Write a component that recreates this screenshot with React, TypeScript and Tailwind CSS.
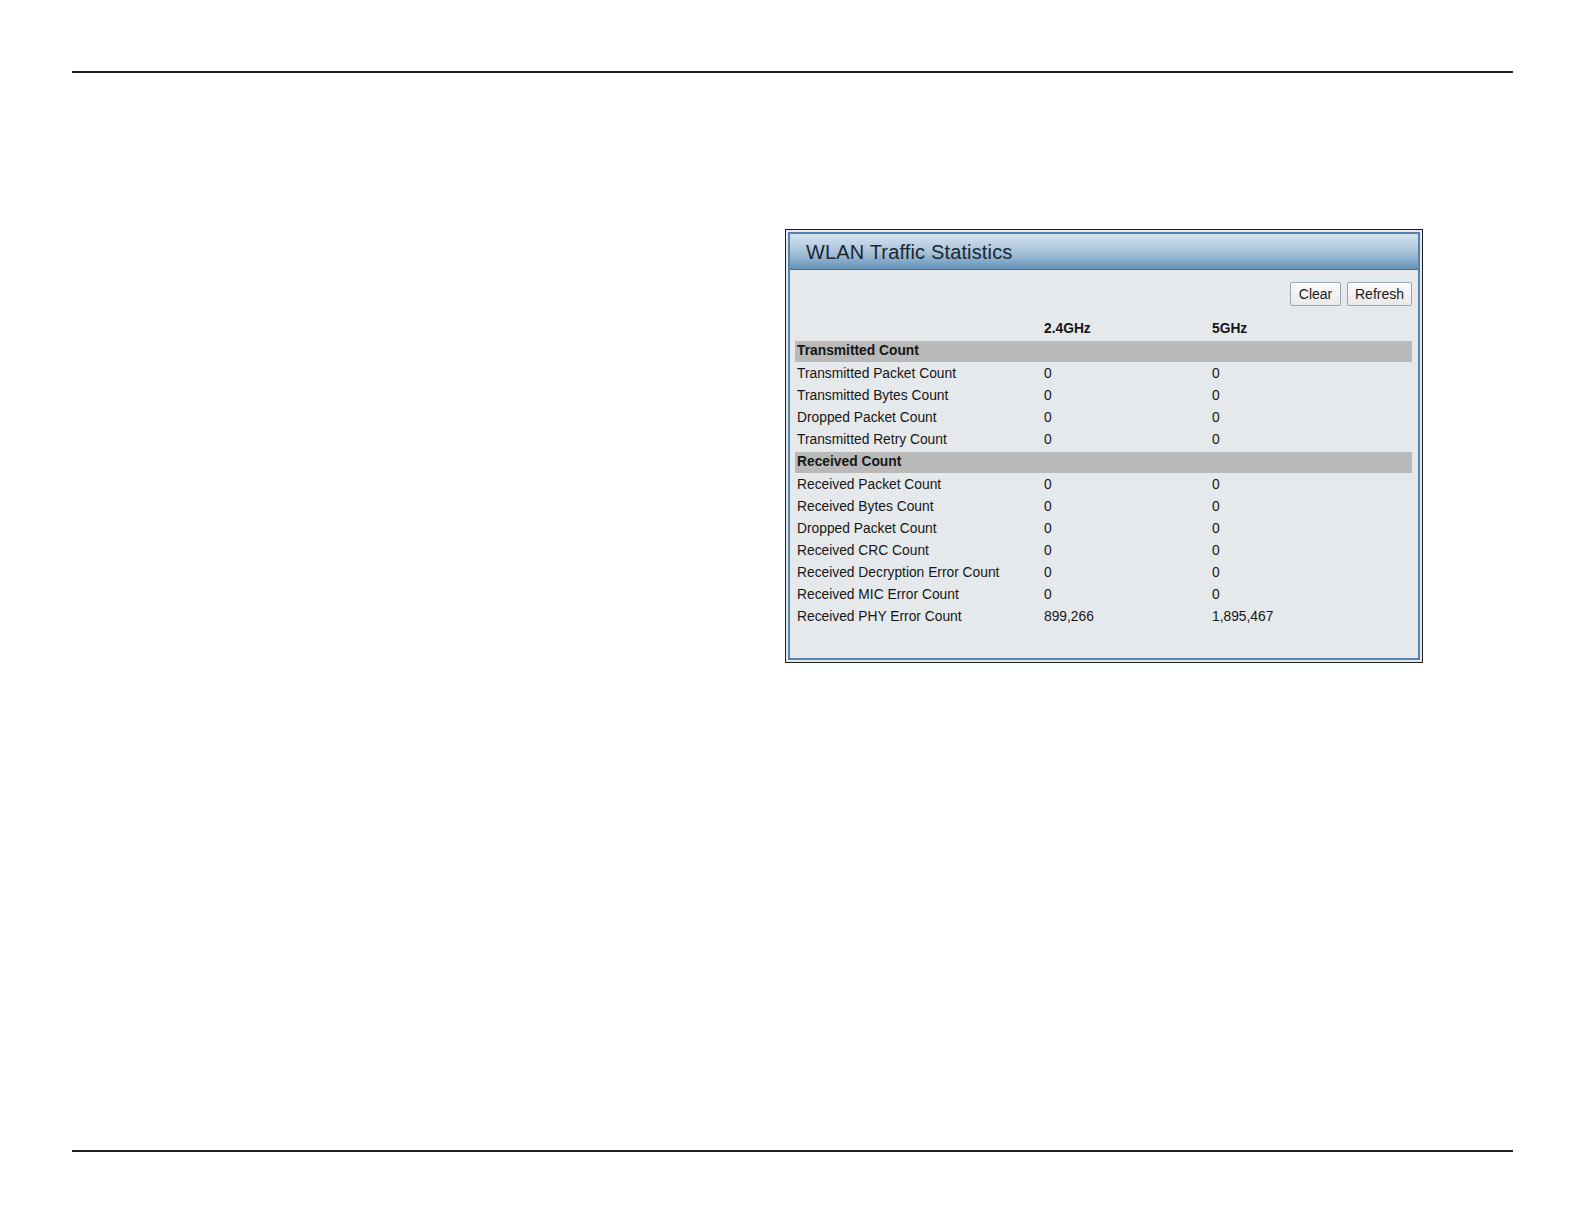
export default function App() {
  return (
    <div
      className="w-[1585px] h-[1225px] bg-white overflow-hidden"
      style={{ fontFamily: '"Liberation Sans", Arial, sans-serif' }}
    >
      <div className="pt-[71px] px-[72px]">
        <div className="h-[2px] bg-[#231f20]" />
        <div className="mt-[156px] ml-[713px]">
          <StatsPanel />
        </div>
        <div className="mt-[487px] h-[2px] bg-[#231f20]" />
      </div>
    </div>
  );
}

type Row = { label: string; a: string; b: string };

const transmitted: Row[] = [
  { label: "Transmitted Packet Count", a: "0", b: "0" },
  { label: "Transmitted Bytes Count", a: "0", b: "0" },
  { label: "Dropped Packet Count", a: "0", b: "0" },
  { label: "Transmitted Retry Count", a: "0", b: "0" },
];

const received: Row[] = [
  { label: "Received Packet Count", a: "0", b: "0" },
  { label: "Received Bytes Count", a: "0", b: "0" },
  { label: "Dropped Packet Count", a: "0", b: "0" },
  { label: "Received CRC Count", a: "0", b: "0" },
  { label: "Received Decryption Error Count", a: "0", b: "0" },
  { label: "Received MIC Error Count", a: "0", b: "0" },
  { label: "Received PHY Error Count", a: "899,266", b: "1,895,467" },
];

function StatsPanel() {
  return (
    <div className="w-[638px] h-[434px] border border-[#1f1f1f] bg-[#e4e9ed] p-[2px]">
      <div className="h-full border-2 border-[#5583ab] flex flex-col">
        <div className="h-[36px] bg-gradient-to-b from-[#d6e4ef] via-[#a9c4da] to-[#6592b8] border-b border-[#3f6f99] flex items-center pl-[16px]">
          <span className="text-[20px] text-[#1c2733] tracking-[0.15px]">WLAN Traffic Statistics</span>
        </div>
        <div className="flex-1 bg-[#e5e9ec] pl-[5px] pr-[6px]">
          <div className="flex justify-end gap-[6px] pt-[12px]">
            <Btn w="w-[51px]">Clear</Btn>
            <Btn w="w-[65px]">Refresh</Btn>
          </div>
          <div className="mt-[12px] text-[13.8px] text-[#161616]">
            <div className="grid grid-cols-[247px_168px_1fr] h-[22px] items-center font-bold">
              <span />
              <span className="pl-[2px]">2.4GHz</span>
              <span className="pl-[2px]">5GHz</span>
            </div>
            <Band>Transmitted Count</Band>
            {transmitted.map((r, i) => (
              <StatRow key={"t" + i} row={r} />
            ))}
            <Band>Received Count</Band>
            {received.map((r, i) => (
              <StatRow key={"r" + i} row={r} />
            ))}
          </div>
        </div>
      </div>
    </div>
  );
}

function Band({ children }: { children: React.ReactNode }) {
  return (
    <div className="h-[23px] py-[1px]">
      <div className="h-full bg-[#b9b9b9] flex items-center pl-[2px] font-bold">{children}</div>
    </div>
  );
}

function StatRow({ row }: { row: Row }) {
  return (
    <div className="grid grid-cols-[247px_168px_1fr] h-[22px] items-center">
      <span className="pl-[2px]">{row.label}</span>
      <span className="pl-[2px]">{row.a}</span>
      <span className="pl-[2px]">{row.b}</span>
    </div>
  );
}

function Btn({ children, w }: { children: React.ReactNode; w: string }) {
  return (
    <button
      className={
        w +
        " h-[24px] border border-[#9aa6b0] rounded-[2px] bg-gradient-to-b from-[#fbfbfb] to-[#e9e9e9] text-[14px] text-[#1a1a1a] leading-none"
      }
    >
      {children}
    </button>
  );
}
